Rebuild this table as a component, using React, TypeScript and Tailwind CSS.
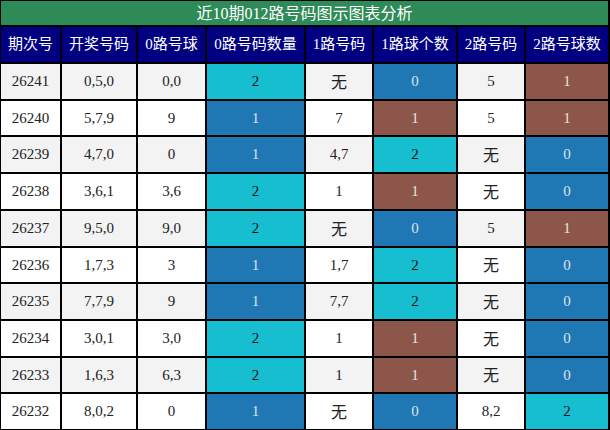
import React from "react";

type Tone = "cyan" | "blue" | "brown";

type Row = {
  issue: string;
  draw: string;
  zero: string;
  zeroCount: [string, Tone];
  one: string;
  oneCount: [string, Tone];
  two: string;
  twoCount: [string, Tone];
};

const ROWS: Row[] = [
  { issue: "26241", draw: "0,5,0", zero: "0,0", zeroCount: ["2", "cyan"], one: "无", oneCount: ["0", "blue"], two: "5", twoCount: ["1", "brown"] },
  { issue: "26240", draw: "5,7,9", zero: "9", zeroCount: ["1", "blue"], one: "7", oneCount: ["1", "brown"], two: "5", twoCount: ["1", "brown"] },
  { issue: "26239", draw: "4,7,0", zero: "0", zeroCount: ["1", "blue"], one: "4,7", oneCount: ["2", "cyan"], two: "无", twoCount: ["0", "blue"] },
  { issue: "26238", draw: "3,6,1", zero: "3,6", zeroCount: ["2", "cyan"], one: "1", oneCount: ["1", "brown"], two: "无", twoCount: ["0", "blue"] },
  { issue: "26237", draw: "9,5,0", zero: "9,0", zeroCount: ["2", "cyan"], one: "无", oneCount: ["0", "blue"], two: "5", twoCount: ["1", "brown"] },
  { issue: "26236", draw: "1,7,3", zero: "3", zeroCount: ["1", "blue"], one: "1,7", oneCount: ["2", "cyan"], two: "无", twoCount: ["0", "blue"] },
  { issue: "26235", draw: "7,7,9", zero: "9", zeroCount: ["1", "blue"], one: "7,7", oneCount: ["2", "cyan"], two: "无", twoCount: ["0", "blue"] },
  { issue: "26234", draw: "3,0,1", zero: "3,0", zeroCount: ["2", "cyan"], one: "1", oneCount: ["1", "brown"], two: "无", twoCount: ["0", "blue"] },
  { issue: "26233", draw: "1,6,3", zero: "6,3", zeroCount: ["2", "cyan"], one: "1", oneCount: ["1", "brown"], two: "无", twoCount: ["0", "blue"] },
  { issue: "26232", draw: "8,0,2", zero: "0", zeroCount: ["1", "blue"], one: "无", oneCount: ["0", "blue"], two: "8,2", twoCount: ["2", "cyan"] },
];

const HEADERS = ["期次号", "开奖号码", "0路号球", "0路号码数量", "1路号码", "1路球个数", "2路号码", "2路号球数"];

const TONE_CLASS: Record<Tone, string> = {
  cyan: "bg-[#17becf] text-[#111]",
  blue: "bg-[#1f77b4] text-[#dde3ea]",
  brown: "bg-[#8c564b] text-[#eee0dc]",
};

function Cell({ children, className = "" }: { children: React.ReactNode; className?: string }) {
  const cjk = children === "无";
  return (
    <div className={`flex items-center justify-center ${cjk ? "text-[16px] pt-[3px]" : "text-[15px]"} ${className}`}>
      {children}
    </div>
  );
}

export default function App() {
  return (
    <div
      className="w-[610px] h-[430px] bg-black pt-px pl-px pr-[2px] pb-[1px] grid gap-[2px] grid-cols-[59px_74px_67px_97px_66px_82px_66px_82px] grid-rows-[24px_35px_repeat(10,1fr)] text-[#222]"
      style={{ fontFamily: '"Liberation Serif", "Noto Sans CJK SC", serif' }}
    >
      <div className="col-span-8 bg-[#2e8b57] text-white text-[16px] flex items-center justify-center leading-none pt-[1px]">
        近10期012路号码图示图表分析
      </div>
      {HEADERS.map((h) => (
        <div key={h} className="bg-[#000080] text-white text-[15px] flex items-center justify-center">
          {h}
        </div>
      ))}
      {ROWS.map((r, i) => {
        const base = i % 2 === 0 ? "bg-[#f3f3f3]" : "bg-white";
        return (
          <React.Fragment key={r.issue}>
            <Cell className={base}>{r.issue}</Cell>
            <Cell className={base}>{r.draw}</Cell>
            <Cell className={base}>{r.zero}</Cell>
            <Cell className={TONE_CLASS[r.zeroCount[1]]}>{r.zeroCount[0]}</Cell>
            <Cell className={base}>{r.one}</Cell>
            <Cell className={TONE_CLASS[r.oneCount[1]]}>{r.oneCount[0]}</Cell>
            <Cell className={base}>{r.two}</Cell>
            <Cell className={TONE_CLASS[r.twoCount[1]]}>{r.twoCount[0]}</Cell>
          </React.Fragment>
        );
      })}
    </div>
  );
}
